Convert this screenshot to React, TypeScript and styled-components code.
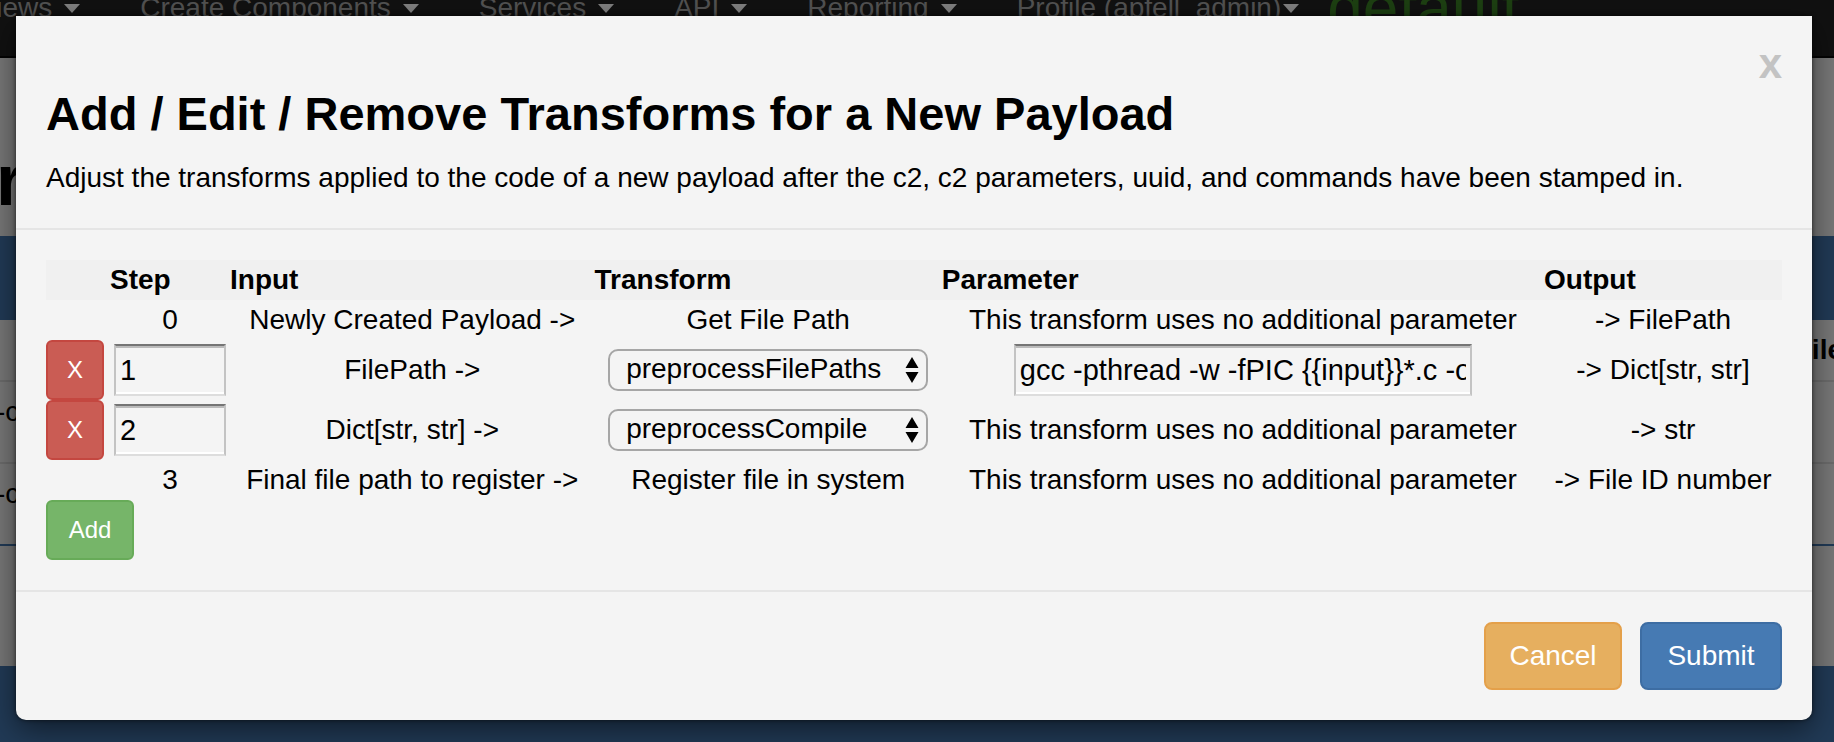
import React from "react";
import styled, { createGlobalStyle, css } from "styled-components";

const Global = createGlobalStyle`
  *, *::before, *::after { box-sizing: border-box; }
  html, body { margin: 0; min-height: 100%; overflow: hidden; }
  body {
    background: #777777;
    color: #000;
    font-family: "Liberation Sans", "Helvetica Neue", Helvetica, Arial, sans-serif;
    font-size: 28px;
    line-height: 40px;
  }
  button, input, select { font: inherit; color: inherit; }
`;

const Screen = styled.div`
  position: relative;
  min-height: 100vh;
  overflow: hidden;
`;

/* Dimmed page behind the dialog */
const Page = styled.div`
  position: absolute;
  inset: 0;
  display: flex;
  flex-direction: column;
  overflow: hidden;
`;

const Nav = styled.nav`
  display: flex;
  flex: none;
  height: 58px;
  background: #111111;
  border-bottom: 2px solid #040404;
  white-space: nowrap;
`;

const NavList = styled.div`
  display: flex;
  gap: 60px;
  margin: -12px 0 0 -22px;
`;

const NavLink = styled.a`
  display: flex;
  flex: none;
  align-items: center;
  gap: 12px;
  height: 40px;
  color: #525252;
  text-decoration: none;

  &:last-child {
    gap: 2px;
  }

  &::after {
    content: "";
    border: 8px solid transparent;
    border-top: 9px solid #808080;
    border-bottom: 0;
  }
`;

const Operation = styled.span`
  margin: -22px 0 0 28px;
  color: #1d4012;
  font-size: 64px;
  line-height: 60px;
`;

const PageTitle = styled.h1`
  flex: none;
  margin: 0 0 0 -4px;
  height: 178px;
  padding-top: 82px;
  font-size: 72px;
  line-height: 80px;
`;

const Band = styled.div<{ $fill?: boolean }>`
  flex: ${(p) => (p.$fill ? "1 0 auto" : "none")};
  height: ${(p) => (p.$fill ? "auto" : "84px")};
  background: #213a56;
`;

const PageHeadRow = styled.div`
  display: flex;
  flex: none;
  align-items: center;
  justify-content: flex-end;
  height: 62px;
  margin-right: -9px;
  border-bottom: 2px solid #6b6b6b;
  font-weight: 700;
`;

const PageRow = styled.div`
  flex: none;
  height: 82px;
  margin-left: -4px;
  padding-top: 10px;
  border-bottom: 2px solid #6b6b6b;
`;

const PageRule = styled.div`
  flex: none;
  height: 122px;
  margin-top: -2px;
  border-top: 2px solid #213a56;
`;

/* Dialog */
const Dialog = styled.section`
  position: relative;
  margin: 16px 22px 22px 16px;
  background: #f4f4f4;
  border-radius: 0 0 10px 10px;
  box-shadow: 0 10px 30px rgba(0, 0, 0, 0.5), 0 0 4px rgba(0, 0, 0, 0.6);
`;

const Header = styled.header`
  padding: 28px 30px 30px;
  border-bottom: 2px solid #e5e5e5;
`;

const Close = styled.button`
  display: block;
  margin: 0 0 0 auto;
  padding: 0;
  border: 0;
  background: none;
  color: #c3c3c3;
  font-size: 42px;
  font-weight: 700;
  line-height: 40px;
`;

const Title = styled.h2`
  margin: 4px 0 0;
  font-size: 47px;
  font-weight: 700;
  line-height: 52px;
`;

const Lead = styled.p`
  margin: 18px 0 0;
`;

const Body = styled.div`
  padding: 30px;
`;

const Table = styled.table`
  width: 100%;
  border-collapse: collapse;
  table-layout: fixed;
`;

const Col = styled.col<{ $w: string }>`
  width: ${(p) => p.$w};
`;

const Th = styled.th`
  padding: 0;
  background: #f0f0f0;
  text-align: left;
`;

const Td = styled.td<{ $left?: boolean }>`
  padding: 0;
  text-align: ${(p) => (p.$left ? "left" : "center")};
  vertical-align: middle;
  white-space: nowrap;
`;

const tones = {
  danger: css`background: #ca5c54; border-color: #c44740;`,
  success: css`background: #76b569; border-color: #67ab58;`,
  warning: css`background: #e6af5f; border-color: #e4a04a;`,
  primary: css`background: #467ab3; border-color: #3d6da3;`,
};

const Button = styled.button<{ $tone: keyof typeof tones; $w: string; $large?: boolean }>`
  display: block;
  min-width: ${(p) => p.$w};
  height: ${(p) => (p.$large ? "68px" : "60px")};
  padding: 0 16px;
  border: 2px solid;
  border-radius: ${(p) => (p.$large ? "8px" : "6px")};
  color: #fff;
  font-size: ${(p) => (p.$large ? "28px" : "24px")};
  ${(p) => tones[p.$tone]}
`;

const Field = styled.input<{ $w: string }>`
  display: block;
  width: ${(p) => p.$w};
  height: 52px;
  margin: 0 auto;
  padding: 2px 4px;
  border: 2px solid;
  border-color: #757575 #c3c3c3 #dddddd;
  border-radius: 0;
  outline: 0;
  background: #f4f4f4;
  box-shadow: inset 0 2px 0 #bbbbbb, inset 0 -2px 0 #ffffff;
  font-size: 29px;
`;

const SelectWrap = styled.span`
  position: relative;
  display: block;
  width: 320px;
  height: 42px;
  margin: 0 auto;
`;

const Select = styled.select`
  display: block;
  width: 100%;
  height: 42px;
  padding: 0 40px 2px 16px;
  appearance: none;
  border: 2px solid #a6a6a6;
  border-radius: 10px;
  background: #f4f4f4;
  line-height: 36px;
`;

const Arrows = styled.svg`
  position: absolute;
  top: 8px;
  right: 9px;
  width: 14px;
  height: 26px;
  pointer-events: none;
`;

const Footer = styled.footer`
  display: flex;
  justify-content: flex-end;
  gap: 18px;
  padding: 30px;
  border-top: 2px solid #e5e5e5;
`;

const menus = ["Views", "Create Components", "Services", "API", "Reporting", "Profile (apfell_admin)"];
const none = "This transform uses no additional parameter";

type Step = { step: number; input: string; transform: string; parameter?: string; output: string; editable?: boolean };

const steps: Step[] = [
  { step: 0, input: "Newly Created Payload ->", transform: "Get File Path", output: "-> FilePath" },
  {
    step: 1, input: "FilePath ->", transform: "preprocessFilePaths", output: "-> Dict[str, str]", editable: true,
    parameter: "gcc -pthread -w -fPIC {{input}}*.c -o",
  },
  { step: 2, input: "Dict[str, str] ->", transform: "preprocessCompile", output: "-> str", editable: true },
  { step: 3, input: "Final file path to register ->", transform: "Register file in system", output: "-> File ID number" },
];

function TransformSelect({ step, value }: { step: number; value: string }) {
  return (
    <SelectWrap>
      <Select aria-label={`Transform for step ${step}`} defaultValue={value}>
        <option>preprocessFilePaths</option>
        <option>preprocessCompile</option>
      </Select>
      <Arrows viewBox="0 0 14 26" aria-hidden="true">
        <path d="M7 0 13.500 11H.5ZM7 26 .5 15h13Z" />
      </Arrows>
    </SelectWrap>
  );
}

export default function App() {
  return (
    <Screen>
      <Global />
      <Page aria-hidden="true">
        <Nav>
          <NavList>
            {menus.map((m) => <NavLink href="#" key={m}>{m}</NavLink>)}
          </NavList>
          <Operation>default</Operation>
        </Nav>
        <PageTitle>r</PageTitle>
        <Band />
        <PageHeadRow>File</PageHeadRow>
        <PageRow>-c</PageRow>
        <PageRow>-c</PageRow>
        <PageRule />
        <Band $fill />
      </Page>

      <Dialog role="dialog" aria-labelledby="dialog-title">
        <Header>
          <Close aria-label="Close">x</Close>
          <Title id="dialog-title">Add / Edit / Remove Transforms for a New Payload</Title>
          <Lead>
            Adjust the transforms applied to the code of a new payload after the c2, c2 parameters, uuid, and commands have been stamped in.
          </Lead>
        </Header>
        <Body>
          <Table>
            <colgroup>
              <Col $w="64px" /><Col $w="120px" /><Col $w="21%" /><Col $w="20%" /><Col $w="auto" /><Col $w="238px" />
            </colgroup>
            <thead>
              <tr>
                <Th aria-label="Remove" /><Th>Step</Th><Th>Input</Th><Th>Transform</Th><Th>Parameter</Th><Th>Output</Th>
              </tr>
            </thead>
            <tbody>
              {steps.map((s) => (
                <tr key={s.step}>
                  <Td $left>{s.editable && <Button $tone="danger" $w="58px">X</Button>}</Td>
                  <Td>{s.editable ? <Field $w="112px" aria-label="Step number" defaultValue={s.step} /> : s.step}</Td>
                  <Td>{s.input}</Td>
                  <Td>{s.editable ? <TransformSelect step={s.step} value={s.transform} /> : s.transform}</Td>
                  <Td>{s.parameter ? <Field $w="458px" aria-label="Parameter" defaultValue={s.parameter} /> : none}</Td>
                  <Td>{s.output}</Td>
                </tr>
              ))}
            </tbody>
          </Table>
          <Button $tone="success" $w="88px">Add</Button>
        </Body>
        <Footer>
          <Button $tone="warning" $w="138px" $large>Cancel</Button>
          <Button $tone="primary" $w="142px" $large>Submit</Button>
        </Footer>
      </Dialog>
    </Screen>
  );
}
